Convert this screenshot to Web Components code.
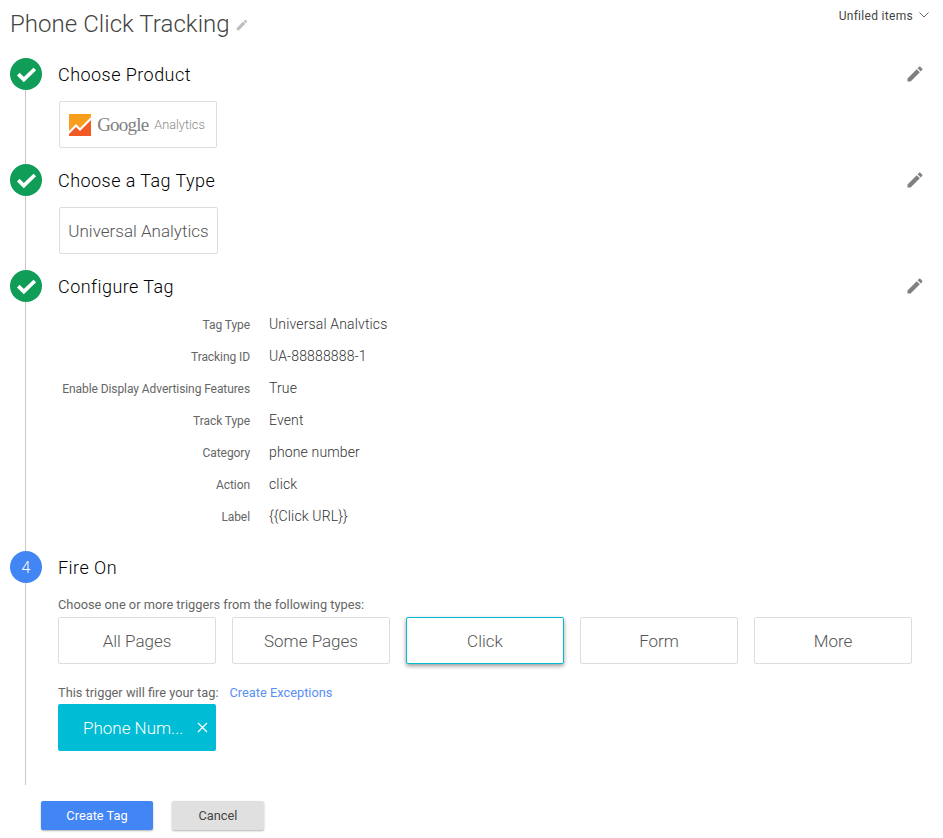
<!DOCTYPE html>
<html>
<head>
<meta charset="utf-8">
<style>
  html, body { margin: 0; background: #fff; }
  body { font-family: Roboto, "Liberation Sans", sans-serif; color: #555; width: 943px; height: 838px; overflow: hidden; }
</style>
</head>
<body>
<tag-editor>
  <span slot="title">Phone Click Tracking</span>

  <editor-step state="done" heading="Choose Product" pitch="106">
    <tile-box>
      <ga-logo></ga-logo>
    </tile-box>
  </editor-step>

  <editor-step state="done" heading="Choose a Tag Type" pitch="106">
    <tile-box style="min-width: 159px">Universal Analytics</tile-box>
  </editor-step>

  <editor-step state="done" heading="Configure Tag" pitch="281">
    <config-table>
      <config-row label="Tag Type">Universal Analvtics</config-row>
      <config-row label="Tracking ID">UA-88888888-1</config-row>
      <config-row label="Enable Display Advertising Features">True</config-row>
      <config-row label="Track Type">Event</config-row>
      <config-row label="Category">phone number</config-row>
      <config-row label="Action">click</config-row>
      <config-row label="Label">{{Click URL}}</config-row>
    </config-table>
  </editor-step>

  <editor-step state="4" heading="Fire On" pitch="234">
    <fire-on></fire-on>
  </editor-step>
</tag-editor>

<script>
const PENCIL = 'M3 17.25V21h3.75L17.81 9.94l-3.75-3.75L3 17.25zM20.71 7.04c.39-.39.39-1.02 0-1.41l-2.34-2.34c-.39-.39-1.02-.39-1.41 0l-1.83 1.83 3.75 3.75 1.83-1.83z';

class TagEditor extends HTMLElement {
    constructor() {
        super();
        this.attachShadow({ mode: 'open' });
        this.shadowRoot.innerHTML = `
            <style>
                :host { display: block; }
                header { display: flex; height: 58px; padding: 0 14px 0 10px; justify-content: space-between; }
                .title { display: flex; align-items: center; height: 48px; font-size: 24px; font-weight: 300; color: #444; letter-spacing: .05px; }
                .title svg { width: 14px; height: 14px; margin: 2px 0 0 5px; fill: #bdbdbd; }
                .folder { display: flex; gap: 6px; height: 32px; align-items: center; font-size: 12px; color: #444; letter-spacing: .3px; }
                .folder svg { width: 10px; height: 6px; margin-top: -2px; }
                footer { display: flex; gap: 19px; padding: 16px 0 0 41px; }
                button { height: 29px; border: 0; border-radius: 2px; font: 12.8px Roboto, sans-serif; box-shadow: 0 1px 2px rgba(0,0,0,.3); padding: 0; }
                .ok { width: 112px; background: #4285f4; color: #fff; }
                .no { width: 92px; background: #e0e0e0; color: #444; }
            </style>
            <header>
                <div class="title"><slot name="title"></slot><svg viewBox="0 0 24 24"><path d="${PENCIL}"/></svg></div>
                <div class="folder">Unfiled items
                    <svg viewBox="0 0 10 6"><path d="M.5.5 5 5 9.5.5" fill="none" stroke="#666"/></svg>
                </div>
            </header>
            <slot></slot>
            <footer>
                <button class="ok">Create Tag</button>
                <button class="no">Cancel</button>
            </footer>
        `;
    }
}
customElements.define('tag-editor', TagEditor);

class EditorStep extends HTMLElement {
    constructor() {
        super();
        this.attachShadow({ mode: 'open' });
    }

    connectedCallback() {
        const state = this.getAttribute('state');
        const done = state === 'done';
        const mark = done
            ? '<svg viewBox="0 0 32 32"><path d="M8.3 16.2l5.5 5.3L24.8 11" fill="none" stroke="#fff" stroke-width="3.8"/></svg>'
            : state;
        this.shadowRoot.innerHTML = `
            <style>
                :host { display: grid; grid-template-columns: 48px 1fr; height: ${this.getAttribute('pitch')}px; padding-left: 10px; box-sizing: border-box; }
                .rail { display: flex; flex-direction: column; }
                .dot { width: 32px; height: 32px; border-radius: 50%; display: flex; align-items: center; justify-content: center; color: #fff; font-size: 16px; font-weight: 300; background: ${done ? '#0f9d58' : '#4285f4'}; flex: none; }
                .dot svg { width: 32px; height: 32px; }
                .line { width: 1px; flex: 1; margin-left: 15px; background: #c8c8c8; }
                .top { display: flex; justify-content: space-between; height: 32px; align-items: center; padding-right: 18px; font-size: 18px; font-weight: 300; letter-spacing: .45px; color: #000; }
                .top svg { width: 20px; height: 20px; fill: #808080; }
                ::slotted(tile-box) { margin: 11px 0 0 1px; }
                ::slotted(config-table) { margin-top: 6px; }
            </style>
            <div class="rail"><div class="dot">${mark}</div><div class="line"></div></div>
            <div>
                <div class="top">${this.getAttribute('heading')}${done ? `<svg viewBox="0 0 24 24"><path d="${PENCIL}"/></svg>` : ''}</div>
                <slot></slot>
            </div>
        `;
    }
}
customElements.define('editor-step', EditorStep);

class TileBox extends HTMLElement {
    constructor() {
        super();
        this.attachShadow({ mode: 'open' });
        this.shadowRoot.innerHTML = `
            <style>
                :host { display: inline-flex; box-sizing: border-box; min-width: 158px; height: 47px; padding: 0 8px; align-items: center; justify-content: center; border: 1px solid #ddd; border-radius: 2px; font-size: 17px; font-weight: 300; color: #555; white-space: nowrap; background: #fff; }
                :host([active]) { border-color: #00bcd4; box-shadow: 0 2px 4px rgba(0,0,0,.4); }
            </style>
            <slot></slot>
        `;
    }
}
customElements.define('tile-box', TileBox);

class GaLogo extends HTMLElement {
    constructor() {
        super();
        this.attachShadow({ mode: 'open' });
        this.shadowRoot.innerHTML = `
            <style>
                :host { display: flex; align-items: center; margin-right: 2px; }
                svg { width: 22px; height: 22px; margin-right: 6px; }
                .g { font: 19px "Liberation Serif", serif; color: #808080; letter-spacing: -.8px; margin-right: 6px; }
                .a { font: 300 12.7px Roboto, sans-serif; color: #888; }
            </style>
            <svg viewBox="0 0 22 22">
                <path d="M0 0h22v3L11 14 7 10l-7 7z" fill="#f99d1c"/>
                <path d="M0 20l7-7 4 4L22 6v16H0z" fill="#f15a24"/>
            </svg>
            <span class="g">Google</span><span class="a">Analytics</span>
        `;
    }
}
customElements.define('ga-logo', GaLogo);

class ConfigTable extends HTMLElement {
    constructor() {
        super();
        this.attachShadow({ mode: 'open' });
        this.shadowRoot.innerHTML = `
            <style>
                :host { display: flex; flex-direction: column; }
            </style>
            <slot></slot>
        `;
    }
}
customElements.define('config-table', ConfigTable);

class ConfigRow extends HTMLElement {
    constructor() {
        super();
        this.attachShadow({ mode: 'open' });
    }

    connectedCallback() {
        this.shadowRoot.innerHTML = `
            <style>
                :host { display: grid; grid-template-columns: 192px 1fr; column-gap: 19px; height: 32px; align-items: center; }
                .k { text-align: right; font-size: 12px; color: #666; white-space: nowrap; letter-spacing: -.08px; margin-top: 2px; }
                .v { font-size: 14px; font-weight: 300; color: #333; letter-spacing: .15px; }
            </style>
            <div class="k">${this.getAttribute('label')}</div>
            <div class="v"><slot></slot></div>
        `;
    }
}
customElements.define('config-row', ConfigRow);

class FireOn extends HTMLElement {
    constructor() {
        super();
        this.attachShadow({ mode: 'open' });
        this.shadowRoot.innerHTML = `
            <style>
                :host { display: block; font-size: 12.8px; color: #666; }
                .hint { height: 16px; line-height: 16px; padding-top: 14px; }
                .types { display: flex; gap: 16px; margin-top: 4px; }
                .fires { display: flex; gap: 11px; height: 16px; line-height: 16px; margin-top: 21px; }
                a { color: #5a8ff5; text-decoration: none; }
                .chip { display: flex; align-items: center; box-sizing: border-box; width: 158px; height: 47px; margin-top: 3px; padding: 0 8px 0 25px; justify-content: space-between; border-radius: 2px; background: #00bcd4; color: #fff; font-size: 17px; font-weight: 300; }
                .chip svg { width: 11px; height: 11px; }
            </style>
            <div class="hint">Choose one or more triggers from the following types:</div>
            <div class="types">
                <tile-box>All Pages</tile-box>
                <tile-box>Some Pages</tile-box>
                <tile-box active>Click</tile-box>
                <tile-box>Form</tile-box>
                <tile-box>More</tile-box>
            </div>
            <div class="fires">This trigger will fire your tag: <a href="#">Create Exceptions</a></div>
            <div class="chip">Phone Num...<svg viewBox="0 0 11 11"><path d="M1 1l9 9M10 1l-9 9" stroke="#fff" stroke-width="1.2" fill="none"/></svg></div>
        `;
    }
}
customElements.define('fire-on', FireOn);
</script>
</body>
</html>
